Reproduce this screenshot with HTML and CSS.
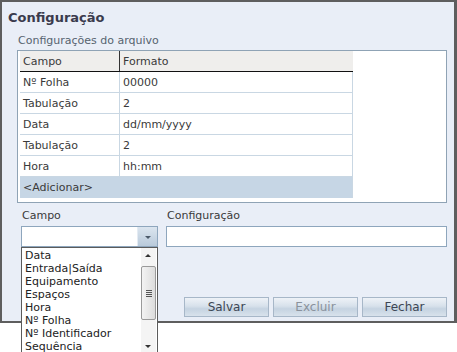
FILE: index.html
```html
<!DOCTYPE html>
<html lang="pt">
<head>
    <meta charset="UTF-8">
    <title>Configuração</title>
    <link rel="stylesheet" href="styles.css">
</head>
<body>
    <div id="panel">
        <h2 id="title">Configuração</h2>
        <div id="content">
            <div class="section-label">Configurações do arquivo</div>
            <div id="fileBox">
                <table id="grid">
                    <tr>
                        <th class="col-campo">Campo</th>
                        <th class="col-formato">Formato</th>
                    </tr>
                    <tr><td>Nº Folha</td><td>00000</td></tr>
                    <tr><td>Tabulação</td><td>2</td></tr>
                    <tr><td>Data</td><td>dd/mm/yyyy</td></tr>
                    <tr><td>Tabulação</td><td>2</td></tr>
                    <tr><td>Hora</td><td>hh:mm</td></tr>
                    <tr class="add-row"><td colspan="2">&lt;Adicionar&gt;</td></tr>
                </table>
            </div>

            <div id="fields">
                <div class="field field-campo">
                    <label>Campo</label>
                    <div class="select">
                        <span class="select-value"></span>
                        <span class="select-btn"><span class="arrow"></span></span>
                    </div>
                    <div class="dropdown">
                        <ul class="options">
                            <li>Data</li>
                            <li>Entrada|Saída</li>
                            <li>Equipamento</li>
                            <li>Espaços</li>
                            <li>Hora</li>
                            <li>Nº Folha</li>
                            <li>Nº Identificador</li>
                            <li>Sequência</li>
                        </ul>
                        <div class="scrollbar">
                            <span class="sb-up"></span>
                            <span class="sb-thumb"><span class="grip"></span></span>
                            <span class="sb-down"></span>
                        </div>
                    </div>
                </div>
                <div class="field field-config">
                    <label>Configuração</label>
                    <input type="text" class="text-input">
                </div>
            </div>

            <div id="buttonContainer">
                <button>Salvar</button>
                <button class="disabled">Excluir</button>
                <button>Fechar</button>
            </div>
        </div>
    </div>
</body>
</html>
```

FILE: styles.css
```css
html, body {
    height: 352px;
    overflow: hidden;
}
body {
    margin: 0;
    padding: 0;
    background-color: #fff;
    font-family: "DejaVu Sans", Verdana, sans-serif;
    font-size: 11px;
    color: #333;
}
#panel {
    position: relative;
    width: 452px;
    height: 319px;
    border: 2px solid #5e5e5e;
    border-right-width: 3px;
    background-color: #e9eef7;
}
#title {
    margin: 0;
    padding: 8px 0 0 6px;
    font-size: 13px;
    line-height: 16px;
    font-weight: bold;
    color: #3a3b4d;
}
#content {
    padding: 0 7px 0 15px;
}
.section-label {
    margin-top: 8px;
    line-height: 14px;
    color: #56636f;
    padding-left: 1px;
}
#fileBox {
    margin-top: 2px;
    height: 151px;
    border: 1px solid #8fa3b5;
    background-color: #fff;
    padding-left: 2px;
}
#grid {
    border-collapse: collapse;
    width: 333px;
    table-layout: fixed;
}
#grid th,
#grid td {
    height: 20px;
    padding: 0 0 0 3px;
    text-align: left;
    font-weight: normal;
    color: #3a3a3a;
    white-space: nowrap;
    border-bottom: 1px solid #c9d7e3;
    border-right: 1px solid #c9d7e3;
}
#grid th {
    background-color: #efeeec;
    border-bottom: 1px solid #111;
}
#grid th.col-campo {
    width: 96px;
    border-right: 1px solid #333;
}
#grid th.col-formato {
    border-right: none;
}
#grid .add-row td {
    height: 21px;
    background-color: #c6d6e5;
    border-bottom: none;
}

#fields {
    display: flex;
    gap: 8px;
    margin-top: 6px;
    padding-left: 4px;
}
.field label {
    display: block;
    line-height: 14px;
    color: #3a3a3a;
    padding-left: 1px;
}
.field-campo {
    position: relative;
    width: 137px;
}
.field-config {
    flex: 1;
}
.select {
    display: flex;
    margin-top: 3px;
    height: 19px;
    border: 1px solid #8ea6bd;
    background-color: #fff;
}
.select-value {
    flex: 1;
}
.select-btn {
    width: 19px;
    display: flex;
    align-items: center;
    justify-content: center;
    background: linear-gradient(#dbe5ef, #b9cadb);
    border-left: 1px solid #e4ebf3;
}
.arrow {
    width: 0;
    height: 0;
    border-left: 3px solid transparent;
    border-right: 3px solid transparent;
    border-top: 3px solid #4b5a6a;
    margin-top: 2px;
}
.text-input {
    display: block;
    box-sizing: border-box;
    width: 100%;
    height: 21px;
    margin: 3px 0 0;
    border: 1px solid #8ea6bd;
    background-color: #fff;
    outline: none;
}
.dropdown {
    position: absolute;
    left: 0;
    top: 38px;
    width: 135px;
    height: 112px;
    display: flex;
    border: 1px solid #5b5b5b;
    background-color: #fff;
    z-index: 5;
}
.options {
    list-style: none;
    margin: 0;
    padding: 1px 0 0 3px;
    flex: 1;
}
.options li {
    line-height: 13px;
    color: #222;
    white-space: nowrap;
}
.scrollbar {
    width: 15px;
    height: 106px;
    display: flex;
    flex-direction: column;
    align-items: center;
    background-color: #f4f4f4;
    margin-right: 1px;
}
.sb-up,
.sb-down {
    height: 15px;
    width: 15px;
    position: relative;
}
.sb-down {
    margin-top: auto;
}
.sb-up::after,
.sb-down::after {
    content: "";
    position: absolute;
    left: 4px;
    border-left: 3px solid transparent;
    border-right: 3px solid transparent;
}
.sb-up::after {
    top: 6px;
    border-bottom: 3px solid #333;
}
.sb-down::after {
    top: 6px;
    border-top: 3px solid #333;
}
.sb-thumb {
    width: 13px;
    height: 52px;
    margin-top: 3px;
    border: 1px solid #9a9a9a;
    border-radius: 2px;
    background: linear-gradient(90deg, #f3f3f3, #dcdcdc);
    display: flex;
    align-items: center;
    justify-content: center;
}
.grip {
    width: 6px;
    height: 7px;
    background: repeating-linear-gradient(#555 0 1px, transparent 1px 2px);
}

#buttonContainer {
    display: flex;
    justify-content: flex-end;
    gap: 4px;
    margin-top: 50px;
}
button {
    width: 85px;
    height: 20px;
    padding: 0;
    font-family: inherit;
    font-size: 12px;
    color: #3c4654;
    border: 1px solid #a7b7c8;
    background: linear-gradient(#eef2f7, #d7e1eb 45%, #c5d3e1 60%, #d8e2ec);
    cursor: pointer;
}
button.disabled {
    color: #8a929c;
}
```
